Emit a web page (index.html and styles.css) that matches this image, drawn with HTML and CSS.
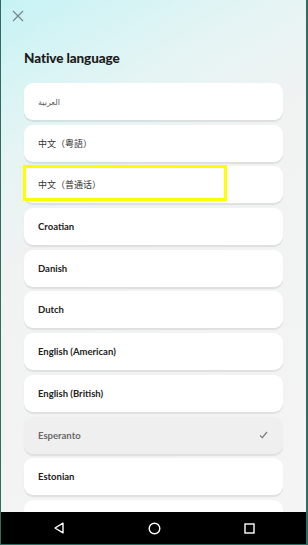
FILE: index.html
```html
<!DOCTYPE html>
<html>
<head>
<meta charset="utf-8">
<link rel="stylesheet" href="styles.css">
</head>
<body>
<div class="frame">
  <div class="screen">
    <div class="content">
      <div class="close">
        <svg width="12" height="12" viewBox="0 0 12 12"><path d="M1 1L11 11M11 1L1 11" stroke="#7a8486" stroke-width="1.2" fill="none"/></svg>
      </div>
      <h1 class="title">Native language</h1>
      <div class="list">
        <div class="card"><span class="ar" dir="rtl">العربية</span></div>
        <div class="card"><span class="cjk">中文（粤語）</span></div>
        <div class="card"><span class="cjk">中文（普通话）</span></div>
        <div class="card"><span class="lbl">Croatian</span></div>
        <div class="card"><span class="lbl">Danish</span></div>
        <div class="card"><span class="lbl">Dutch</span></div>
        <div class="card"><span class="lbl">English (American)</span></div>
        <div class="card"><span class="lbl">English (British)</span></div>
        <div class="card selected"><span class="lbl">Esperanto</span>
          <svg class="check" width="9" height="8" viewBox="0 0 9 8"><path d="M1 4.3L3.3 6.6L8 1" stroke="#7a7a7a" stroke-width="1.2" fill="none"/></svg>
        </div>
        <div class="card"><span class="lbl">Estonian</span></div>
        <div class="card"></div>
      </div>
      <div class="highlight"></div>
    </div>
    <div class="navbar">
      <svg width="12" height="12" viewBox="0 0 12 12"><path d="M10 1.2L2 6L10 10.8Z" stroke="#fff" stroke-width="1.4" fill="none" stroke-linejoin="round"/></svg>
      <svg width="13" height="13" viewBox="0 0 13 13"><circle cx="6.5" cy="6.5" r="5.3" stroke="#fff" stroke-width="1.4" fill="none"/></svg>
      <svg width="11" height="11" viewBox="0 0 11 11"><rect x="1" y="1" width="9" height="9" stroke="#fff" stroke-width="1.4" fill="none"/></svg>
    </div>
  </div>
</div>
</body>
</html>
```
FILE: styles.css
```css
html, body {
  margin: 0;
  padding: 0;
  width: 308px;
  height: 545px;
  overflow: hidden;
  background: #2f6b60;
}
.frame {
  width: 308px;
  height: 545px;
  box-sizing: border-box;
  border-left: 1px solid #2f6b60;
  border-right: 2px solid #2f6b60;
  border-bottom: 1px solid #2f6b60;
}
.screen {
  width: 305px;
  height: 544px;
  display: flex;
  flex-direction: column;
  overflow: hidden;
}
.content {
  position: relative;
  flex: 1;
  overflow: hidden;
  background: linear-gradient(150deg, #c6f3f5 0%, #e4f4f4 22%, #f1f2f2 40%, #f4f4f4 100%);
  font-family: Lato, "Noto Sans", sans-serif;
}
.close {
  position: absolute;
  left: 11px;
  top: 10px;
  width: 12px;
  height: 12px;
}
.close svg { display: block; }
.title {
  margin: 0;
  padding: 49px 0 0 23px;
  font-size: 13.5px;
  font-weight: 900;
  color: #1c1c1c;
  line-height: 18px;
  letter-spacing: -0.1px;
}
.list {
  display: flex;
  flex-direction: column;
  gap: 4.7px;
  padding: 16px 23px 0 23px;
}
.card {
  height: 37px;
  box-sizing: border-box;
  background: #fff;
  border-radius: 9px;
  box-shadow: 0 1.5px 1px rgba(0,0,0,0.08);
  display: flex;
  align-items: center;
  justify-content: space-between;
  padding: 0 15px 0 14px;
  flex-shrink: 0;
}
.card.selected {
  background: #efefef;
}
.lbl {
  font-size: 9.5px;
  font-weight: 700;
  color: #222;
}
.selected .lbl {
  color: #6a6a6a;
}
.cjk {
  font-family: "Noto Sans CJK SC", sans-serif;
  font-size: 9px;
  color: #333;
}
.ar {
  font-family: "Noto Sans", "DejaVu Sans", sans-serif;
  font-size: 8px;
  color: #555;
}
.check { display: block; }
.highlight {
  position: absolute;
  left: 22px;
  top: 165px;
  width: 204px;
  height: 36px;
  box-sizing: border-box;
  border: 3px solid #ffff00;
}
.navbar {
  height: 32px;
  flex-shrink: 0;
  background: #000;
  display: flex;
  align-items: center;
  justify-content: flex-start;
  gap: 83px;
  padding: 0 0 0 52px;
}
.navbar svg { display: block; }
```
